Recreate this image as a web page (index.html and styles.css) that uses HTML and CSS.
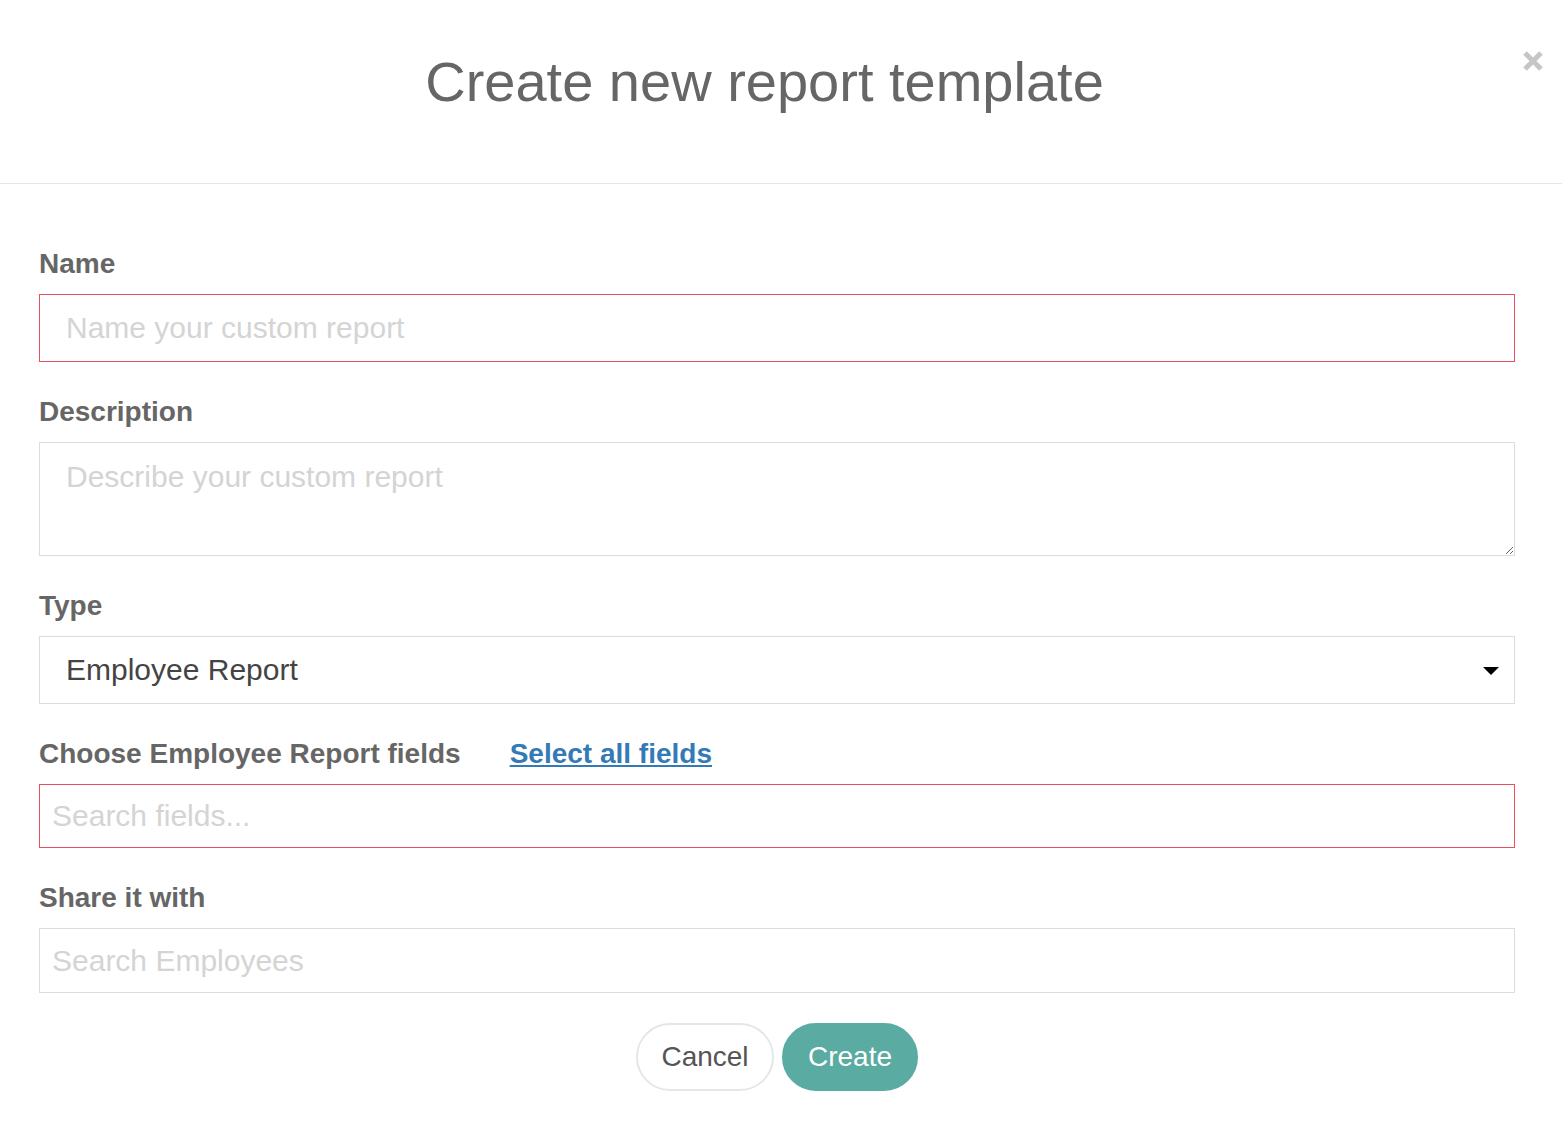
FILE: index.html
```html
<!DOCTYPE html>
<html>
<head>
<meta charset="utf-8">
<link rel="stylesheet" href="styles.css">
</head>
<body>
<div class="modal">
  <header class="modal-header">
    <h1 class="modal-title">Create new report template</h1>
    <button class="close" aria-label="Close">
      <svg width="22" height="22" viewBox="0 0 22 22"><path d="M3 3L19 19M19 3L3 19" stroke="#c6c6c6" stroke-width="5" stroke-linecap="butt"/></svg>
    </button>
  </header>
  <form class="modal-body">
    <div class="group">
      <label class="label">Name</label>
      <input class="field field-lg invalid" type="text" placeholder="Name your custom report">
    </div>
    <div class="group">
      <label class="label">Description</label>
      <textarea class="field field-lg area" placeholder="Describe your custom report"></textarea>
    </div>
    <div class="group">
      <label class="label">Type</label>
      <div class="select">
        <span class="select-value">Employee Report</span>
        <span class="caret"></span>
      </div>
    </div>
    <div class="group">
      <div class="label-row">
        <label class="label">Choose Employee Report fields</label>
        <a class="link" href="#">Select all fields</a>
      </div>
      <input class="field field-sm invalid search" type="text" placeholder="Search fields...">
    </div>
    <div class="group last">
      <label class="label">Share it with</label>
      <input class="field field-sm share" type="text" placeholder="Search Employees">
    </div>
    <div class="actions">
      <button type="button" class="btn btn-cancel">Cancel</button>
      <button type="button" class="btn btn-create">Create</button>
    </div>
  </form>
</div>
</body>
</html>
```
FILE: styles.css
```css
* { box-sizing: border-box; }
html, body { margin: 0; padding: 0; background: #fff; }
body { font-family: "Liberation Sans", Arial, Helvetica, sans-serif; color: #333; }

.modal-header {
  position: relative;
  height: 184px;
  border-bottom: 1px solid #e5e5e5;
  display: flex;
  align-items: flex-start;
  justify-content: center;
  padding-right: 33px;
}
.modal-title {
  margin: 47px 0 0 0;
  font-size: 56px;
  line-height: 70px;
  font-weight: normal;
  color: #666;
}
.close {
  position: absolute;
  top: 50px;
  right: 18px;
  border: 0;
  background: none;
  padding: 0;
  cursor: pointer;
  width: 22px;
  height: 22px;
}
.close svg { display: block; }

.modal-body {
  padding: 64px 47px 0 39px;
  margin: 0;
}
.group { margin-bottom: 34px; }
.group.last { margin-bottom: 30px; }
.label {
  display: block;
  font-size: 28px;
  line-height: 32px;
  font-weight: bold;
  color: #666;
  margin-bottom: 14px;
}
.label-row {
  display: flex;
  align-items: baseline;
  gap: 49px;
  margin-bottom: 14px;
}
.label-row .label { margin-bottom: 0; }
.link {
  font-size: 28px;
  line-height: 32px;
  font-weight: bold;
  color: #337ab7;
  text-decoration: underline;
}

.field {
  display: block;
  width: 100%;
  border: 1px solid #dcdcdc;
  background: #fff;
  font-family: "Liberation Sans", Arial, Helvetica, sans-serif;
  font-size: 30px;
  color: #333;
  outline: none;
  margin: 0;
  border-radius: 0;
}
.field::placeholder { color: #d4d4d4; opacity: 1; }
.field-lg { height: 68px; padding: 0 26px; }
.area { height: 114px; padding: 17px 26px; resize: vertical; line-height: 34px; }
.field-sm { padding: 0 12px; }
.search { height: 64px; }
.share { height: 65px; }
.invalid { border-color: #e8505f; }

.select {
  display: flex;
  align-items: center;
  justify-content: space-between;
  height: 68px;
  border: 1px solid #dcdcdc;
  padding: 0 15px 0 26px;
}
.select-value { font-size: 30px; color: #444; }
.caret {
  width: 0;
  height: 0;
  border-left: 8px solid transparent;
  border-right: 8px solid transparent;
  border-top: 8px solid #000;
  margin-top: 2px;
}

.actions {
  display: flex;
  justify-content: center;
  gap: 8px;
}
.btn {
  height: 68px;
  border-radius: 34px;
  font-family: "Liberation Sans", Arial, Helvetica, sans-serif;
  font-size: 28px;
  padding: 0;
  cursor: pointer;
}
.btn-cancel {
  background: #fff;
  border: 2px solid #e4e7ea;
  color: #555;
  width: 138px;
}
.btn-create {
  background: #5aaba2;
  border: 2px solid #5aaba2;
  color: #fff;
  width: 136px;
}
```
